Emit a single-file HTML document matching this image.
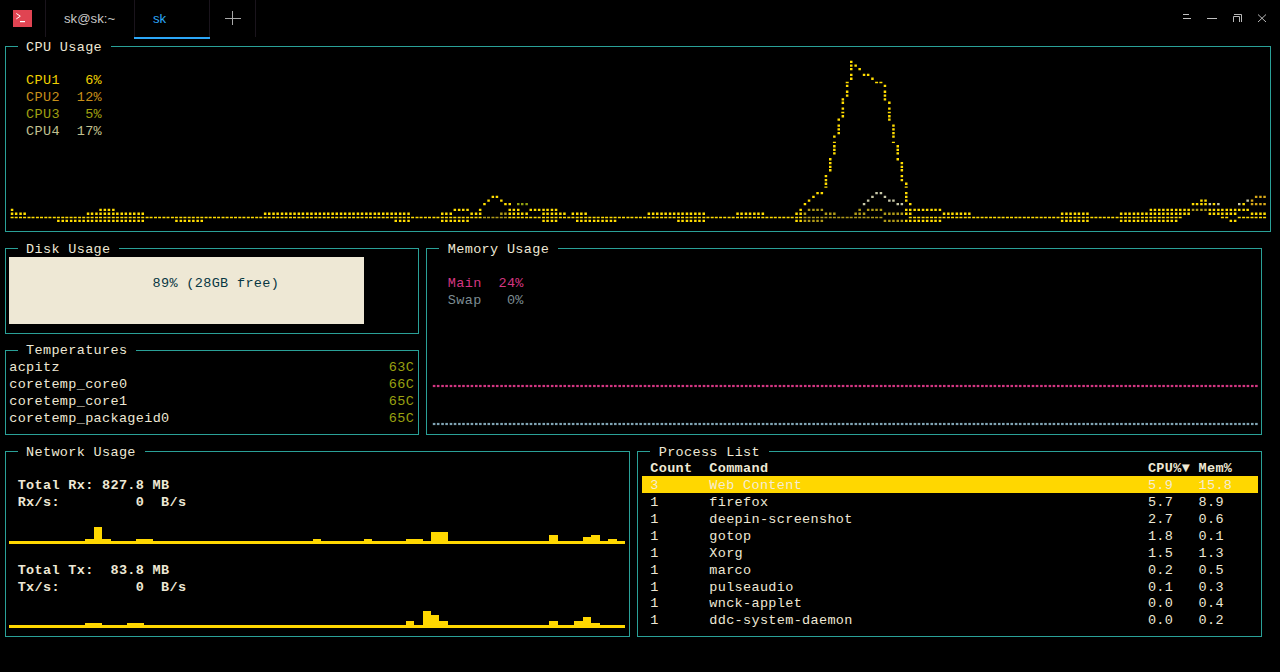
<!DOCTYPE html><html><head><meta charset="utf-8"><style>
html,body{margin:0;padding:0;background:#000;width:1280px;height:672px;overflow:hidden;position:relative}
.bx{position:absolute;box-sizing:border-box;border:1px solid #2aa198}
.gap{position:absolute;height:3px;background:#000}
.t{position:absolute;font-family:"Liberation Mono",monospace;font-size:13.5px;line-height:17px;white-space:pre;letter-spacing:0.335px}
.s{position:absolute}
</style></head><body>
<div class="s" style="left:13px;top:10px;width:19px;height:17px;background:#e04452"></div>
<svg class="s" style="left:0;top:0" width="1280" height="40"><path d="M16.3 13.5 L20.3 16.2 L16.3 18.9" fill="none" stroke="#fff" stroke-width="1"/><rect x="20" y="21" width="5" height="1.2" fill="#fff"/><rect x="45" y="0" width="1" height="37" fill="#1a141c"/><rect x="134" y="0" width="1" height="37" fill="#1a141c"/><rect x="209" y="0" width="1" height="37" fill="#1a141c"/><rect x="255" y="0" width="1" height="37" fill="#1a141c"/><rect x="134" y="37" width="76" height="2" fill="#2ca7f8"/><rect x="225" y="18" width="16" height="1" fill="#a8a8a8"/><rect x="232" y="11" width="1" height="14" fill="#a8a8a8"/><rect x="1183" y="14" width="6" height="1" fill="#c0c0c0"/><rect x="1183" y="18" width="8" height="1" fill="#c0c0c0"/><rect x="1207" y="18" width="10" height="1" fill="#c0c0c0"/><path d="M1234 14.5 H1241.5 V22 M1233.5 22 V16.5 H1239.5 V22" fill="none" stroke="#b8b8b8" stroke-width="1"/><path d="M1258 14.5 L1266 22 M1266 14.5 L1258 22" fill="none" stroke="#b8b8b8" stroke-width="1"/></svg>
<div class="s" style="left:64px;top:10px;font-family:'Liberation Sans',sans-serif;font-size:13.2px;line-height:18px;color:#c8c8c8">sk@sk:~</div>
<div class="s" style="left:153px;top:10px;font-family:'Liberation Sans',sans-serif;font-size:13.2px;line-height:18px;color:#2ca7f8">sk</div>
<div class="bx" style="left:5px;top:46px;width:1266px;height:186px"></div>
<div class="gap" style="left:18px;top:45px;width:93px"></div>
<div class="t" style="left:26.09px;top:39.00px;color:#eee8d5;">CPU&#160;Usage</div>
<div class="bx" style="left:5px;top:248px;width:414px;height:86px"></div>
<div class="gap" style="left:18px;top:247px;width:101px"></div>
<div class="t" style="left:26.09px;top:241.00px;color:#eee8d5;">Disk&#160;Usage</div>
<div class="bx" style="left:5px;top:350px;width:414px;height:85px"></div>
<div class="gap" style="left:18px;top:349px;width:118px"></div>
<div class="t" style="left:26.09px;top:342.00px;color:#eee8d5;">Temperatures</div>
<div class="bx" style="left:5px;top:451px;width:625px;height:186px"></div>
<div class="gap" style="left:18px;top:450px;width:127px"></div>
<div class="t" style="left:26.09px;top:444.00px;color:#eee8d5;">Network&#160;Usage</div>
<div class="bx" style="left:426px;top:248px;width:836px;height:187px"></div>
<div class="gap" style="left:439px;top:247px;width:119px"></div>
<div class="t" style="left:447.84px;top:241.00px;color:#eee8d5;">Memory&#160;Usage</div>
<div class="bx" style="left:637px;top:451px;width:625px;height:186px"></div>
<div class="gap" style="left:650px;top:450px;width:119px"></div>
<div class="t" style="left:658.71px;top:444.00px;color:#eee8d5;">Process&#160;List</div>
<div class="t" style="left:26.09px;top:72.00px;color:#f0d000;">CPU1&#160;&#160;&#160;6%</div>
<div class="t" style="left:26.09px;top:89.00px;color:#c8901a;">CPU2&#160;&#160;12%</div>
<div class="t" style="left:26.09px;top:106.00px;color:#a0a010;">CPU3&#160;&#160;&#160;5%</div>
<div class="t" style="left:26.09px;top:123.00px;color:#c0c090;">CPU4&#160;&#160;17%</div>
<div class="s" style="left:9px;top:257px;width:355px;height:67px;background:#eee8d5"></div>
<div class="t" style="left:152.61px;top:275.00px;color:#073642;">89%&#160;(28GB&#160;free)</div>
<div class="t" style="left:9.22px;top:359.00px;color:#eee8d5;">acpitz</div>
<div class="t" style="left:388.79px;top:359.00px;color:#9aa010;">63C</div>
<div class="t" style="left:9.22px;top:376.00px;color:#eee8d5;">coretemp_core0</div>
<div class="t" style="left:388.79px;top:376.00px;color:#9aa010;">66C</div>
<div class="t" style="left:9.22px;top:393.00px;color:#eee8d5;">coretemp_core1</div>
<div class="t" style="left:388.79px;top:393.00px;color:#9aa010;">65C</div>
<div class="t" style="left:9.22px;top:410.00px;color:#eee8d5;">coretemp_packageid0</div>
<div class="t" style="left:388.79px;top:410.00px;color:#9aa010;">65C</div>
<div class="t" style="left:447.84px;top:275.00px;color:#d33682;">Main&#160;&#160;24%</div>
<div class="t" style="left:447.84px;top:292.00px;color:#7d8d93;">Swap&#160;&#160;&#160;0%</div>
<div class="t" style="left:17.65px;top:477.00px;color:#eee8d5;font-weight:bold;">Total&#160;Rx:&#160;827.8&#160;MB</div>
<div class="t" style="left:17.65px;top:494.00px;color:#eee8d5;font-weight:bold;">Rx/s:&#160;&#160;&#160;&#160;&#160;&#160;&#160;&#160;&#160;0&#160;&#160;B/s</div>
<div class="t" style="left:17.65px;top:562.00px;color:#eee8d5;font-weight:bold;">Total&#160;Tx:&#160;&#160;83.8&#160;MB</div>
<div class="t" style="left:17.65px;top:579.00px;color:#eee8d5;font-weight:bold;">Tx/s:&#160;&#160;&#160;&#160;&#160;&#160;&#160;&#160;&#160;0&#160;&#160;B/s</div>
<div class="s" style="left:642px;top:476px;width:616px;height:17px;background:#ffd700"></div>
<div class="t" style="left:650.28px;top:460.00px;color:#eee8d5;font-weight:bold;">Count</div>
<div class="t" style="left:709.32px;top:460.00px;color:#eee8d5;font-weight:bold;">Command</div>
<div class="t" style="left:1147.94px;top:460.00px;color:#eee8d5;font-weight:bold;">CPU%▼&#160;Mem%</div>
<div class="t" style="left:650.28px;top:477.00px;color:#f5ecd2;">3</div>
<div class="t" style="left:709.32px;top:477.00px;color:#f5ecd2;">Web&#160;Content</div>
<div class="t" style="left:1147.94px;top:477.00px;color:#f5ecd2;">5.9</div>
<div class="t" style="left:1198.55px;top:477.00px;color:#f5ecd2;">15.8</div>
<div class="t" style="left:650.28px;top:494.00px;color:#eee8d5;">1</div>
<div class="t" style="left:709.32px;top:494.00px;color:#eee8d5;">firefox</div>
<div class="t" style="left:1147.94px;top:494.00px;color:#eee8d5;">5.7</div>
<div class="t" style="left:1198.55px;top:494.00px;color:#eee8d5;">8.9</div>
<div class="t" style="left:650.28px;top:511.00px;color:#eee8d5;">1</div>
<div class="t" style="left:709.32px;top:511.00px;color:#eee8d5;">deepin-screenshot</div>
<div class="t" style="left:1147.94px;top:511.00px;color:#eee8d5;">2.7</div>
<div class="t" style="left:1198.55px;top:511.00px;color:#eee8d5;">0.6</div>
<div class="t" style="left:650.28px;top:528.00px;color:#eee8d5;">1</div>
<div class="t" style="left:709.32px;top:528.00px;color:#eee8d5;">gotop</div>
<div class="t" style="left:1147.94px;top:528.00px;color:#eee8d5;">1.8</div>
<div class="t" style="left:1198.55px;top:528.00px;color:#eee8d5;">0.1</div>
<div class="t" style="left:650.28px;top:545.00px;color:#eee8d5;">1</div>
<div class="t" style="left:709.32px;top:545.00px;color:#eee8d5;">Xorg</div>
<div class="t" style="left:1147.94px;top:545.00px;color:#eee8d5;">1.5</div>
<div class="t" style="left:1198.55px;top:545.00px;color:#eee8d5;">1.3</div>
<div class="t" style="left:650.28px;top:562.00px;color:#eee8d5;">1</div>
<div class="t" style="left:709.32px;top:562.00px;color:#eee8d5;">marco</div>
<div class="t" style="left:1147.94px;top:562.00px;color:#eee8d5;">0.2</div>
<div class="t" style="left:1198.55px;top:562.00px;color:#eee8d5;">0.5</div>
<div class="t" style="left:650.28px;top:579.00px;color:#eee8d5;">1</div>
<div class="t" style="left:709.32px;top:579.00px;color:#eee8d5;">pulseaudio</div>
<div class="t" style="left:1147.94px;top:579.00px;color:#eee8d5;">0.1</div>
<div class="t" style="left:1198.55px;top:579.00px;color:#eee8d5;">0.3</div>
<div class="t" style="left:650.28px;top:595.00px;color:#eee8d5;">1</div>
<div class="t" style="left:709.32px;top:595.00px;color:#eee8d5;">wnck-applet</div>
<div class="t" style="left:1147.94px;top:595.00px;color:#eee8d5;">0.0</div>
<div class="t" style="left:1198.55px;top:595.00px;color:#eee8d5;">0.4</div>
<div class="t" style="left:650.28px;top:612.00px;color:#eee8d5;">1</div>
<div class="t" style="left:709.32px;top:612.00px;color:#eee8d5;">ddc-system-daemon</div>
<div class="t" style="left:1147.94px;top:612.00px;color:#eee8d5;">0.0</div>
<div class="t" style="left:1198.55px;top:612.00px;color:#eee8d5;">0.2</div>
<svg class="s" style="left:0;top:0" width="640" height="672"><rect x="9" y="541" width="616" height="3" fill="#ffd700"/><rect x="85" y="539" width="26" height="2" fill="#ffd700"/><rect x="94" y="527" width="8" height="14" fill="#ffd700"/><rect x="136" y="539" width="17" height="2" fill="#ffd700"/><rect x="313" y="539" width="8" height="2" fill="#ffd700"/><rect x="364" y="539" width="8" height="2" fill="#ffd700"/><rect x="406" y="539" width="17" height="2" fill="#ffd700"/><rect x="431" y="532" width="17" height="9" fill="#ffd700"/><rect x="549" y="535" width="9" height="6" fill="#ffd700"/><rect x="583" y="537" width="8" height="4" fill="#ffd700"/><rect x="591" y="535" width="9" height="6" fill="#ffd700"/><rect x="608" y="539" width="9" height="2" fill="#ffd700"/></svg>
<svg class="s" style="left:0;top:0" width="640" height="672"><rect x="9" y="625" width="616" height="3" fill="#ffd700"/><rect x="85" y="623" width="17" height="2" fill="#ffd700"/><rect x="127" y="623" width="17" height="2" fill="#ffd700"/><rect x="406" y="621" width="8" height="4" fill="#ffd700"/><rect x="423" y="611" width="8" height="14" fill="#ffd700"/><rect x="431" y="615" width="8" height="10" fill="#ffd700"/><rect x="439" y="621" width="9" height="4" fill="#ffd700"/><rect x="549" y="621" width="9" height="4" fill="#ffd700"/><rect x="574" y="621" width="9" height="4" fill="#ffd700"/><rect x="583" y="617" width="8" height="8" fill="#ffd700"/><rect x="591" y="623" width="9" height="2" fill="#ffd700"/></svg>
<svg class="s" style="left:0;top:0" width="1280" height="672"><rect x="432.80" y="384.9" width="2.6" height="2.2" fill="#d33682"/><rect x="436.88" y="384.9" width="2.6" height="2.2" fill="#d33682"/><rect x="441.24" y="384.9" width="2.6" height="2.2" fill="#d33682"/><rect x="445.31" y="384.9" width="2.6" height="2.2" fill="#d33682"/><rect x="449.67" y="384.9" width="2.6" height="2.2" fill="#d33682"/><rect x="453.75" y="384.9" width="2.6" height="2.2" fill="#d33682"/><rect x="458.11" y="384.9" width="2.6" height="2.2" fill="#d33682"/><rect x="462.19" y="384.9" width="2.6" height="2.2" fill="#d33682"/><rect x="466.54" y="384.9" width="2.6" height="2.2" fill="#d33682"/><rect x="470.62" y="384.9" width="2.6" height="2.2" fill="#d33682"/><rect x="474.98" y="384.9" width="2.6" height="2.2" fill="#d33682"/><rect x="479.06" y="384.9" width="2.6" height="2.2" fill="#d33682"/><rect x="483.41" y="384.9" width="2.6" height="2.2" fill="#d33682"/><rect x="487.49" y="384.9" width="2.6" height="2.2" fill="#d33682"/><rect x="491.85" y="384.9" width="2.6" height="2.2" fill="#d33682"/><rect x="495.93" y="384.9" width="2.6" height="2.2" fill="#d33682"/><rect x="500.28" y="384.9" width="2.6" height="2.2" fill="#d33682"/><rect x="504.36" y="384.9" width="2.6" height="2.2" fill="#d33682"/><rect x="508.72" y="384.9" width="2.6" height="2.2" fill="#d33682"/><rect x="512.80" y="384.9" width="2.6" height="2.2" fill="#d33682"/><rect x="517.15" y="384.9" width="2.6" height="2.2" fill="#d33682"/><rect x="521.23" y="384.9" width="2.6" height="2.2" fill="#d33682"/><rect x="525.59" y="384.9" width="2.6" height="2.2" fill="#d33682"/><rect x="529.67" y="384.9" width="2.6" height="2.2" fill="#d33682"/><rect x="534.02" y="384.9" width="2.6" height="2.2" fill="#d33682"/><rect x="538.10" y="384.9" width="2.6" height="2.2" fill="#d33682"/><rect x="542.46" y="384.9" width="2.6" height="2.2" fill="#d33682"/><rect x="546.54" y="384.9" width="2.6" height="2.2" fill="#d33682"/><rect x="550.89" y="384.9" width="2.6" height="2.2" fill="#d33682"/><rect x="554.97" y="384.9" width="2.6" height="2.2" fill="#d33682"/><rect x="559.33" y="384.9" width="2.6" height="2.2" fill="#d33682"/><rect x="563.41" y="384.9" width="2.6" height="2.2" fill="#d33682"/><rect x="567.76" y="384.9" width="2.6" height="2.2" fill="#d33682"/><rect x="571.84" y="384.9" width="2.6" height="2.2" fill="#d33682"/><rect x="576.20" y="384.9" width="2.6" height="2.2" fill="#d33682"/><rect x="580.28" y="384.9" width="2.6" height="2.2" fill="#d33682"/><rect x="584.63" y="384.9" width="2.6" height="2.2" fill="#d33682"/><rect x="588.71" y="384.9" width="2.6" height="2.2" fill="#d33682"/><rect x="593.07" y="384.9" width="2.6" height="2.2" fill="#d33682"/><rect x="597.15" y="384.9" width="2.6" height="2.2" fill="#d33682"/><rect x="601.50" y="384.9" width="2.6" height="2.2" fill="#d33682"/><rect x="605.58" y="384.9" width="2.6" height="2.2" fill="#d33682"/><rect x="609.94" y="384.9" width="2.6" height="2.2" fill="#d33682"/><rect x="614.02" y="384.9" width="2.6" height="2.2" fill="#d33682"/><rect x="618.37" y="384.9" width="2.6" height="2.2" fill="#d33682"/><rect x="622.45" y="384.9" width="2.6" height="2.2" fill="#d33682"/><rect x="626.81" y="384.9" width="2.6" height="2.2" fill="#d33682"/><rect x="630.89" y="384.9" width="2.6" height="2.2" fill="#d33682"/><rect x="635.24" y="384.9" width="2.6" height="2.2" fill="#d33682"/><rect x="639.32" y="384.9" width="2.6" height="2.2" fill="#d33682"/><rect x="643.68" y="384.9" width="2.6" height="2.2" fill="#d33682"/><rect x="647.76" y="384.9" width="2.6" height="2.2" fill="#d33682"/><rect x="652.11" y="384.9" width="2.6" height="2.2" fill="#d33682"/><rect x="656.19" y="384.9" width="2.6" height="2.2" fill="#d33682"/><rect x="660.55" y="384.9" width="2.6" height="2.2" fill="#d33682"/><rect x="664.63" y="384.9" width="2.6" height="2.2" fill="#d33682"/><rect x="668.98" y="384.9" width="2.6" height="2.2" fill="#d33682"/><rect x="673.06" y="384.9" width="2.6" height="2.2" fill="#d33682"/><rect x="677.42" y="384.9" width="2.6" height="2.2" fill="#d33682"/><rect x="681.50" y="384.9" width="2.6" height="2.2" fill="#d33682"/><rect x="685.85" y="384.9" width="2.6" height="2.2" fill="#d33682"/><rect x="689.93" y="384.9" width="2.6" height="2.2" fill="#d33682"/><rect x="694.29" y="384.9" width="2.6" height="2.2" fill="#d33682"/><rect x="698.37" y="384.9" width="2.6" height="2.2" fill="#d33682"/><rect x="702.72" y="384.9" width="2.6" height="2.2" fill="#d33682"/><rect x="706.80" y="384.9" width="2.6" height="2.2" fill="#d33682"/><rect x="711.16" y="384.9" width="2.6" height="2.2" fill="#d33682"/><rect x="715.24" y="384.9" width="2.6" height="2.2" fill="#d33682"/><rect x="719.59" y="384.9" width="2.6" height="2.2" fill="#d33682"/><rect x="723.67" y="384.9" width="2.6" height="2.2" fill="#d33682"/><rect x="728.03" y="384.9" width="2.6" height="2.2" fill="#d33682"/><rect x="732.11" y="384.9" width="2.6" height="2.2" fill="#d33682"/><rect x="736.46" y="384.9" width="2.6" height="2.2" fill="#d33682"/><rect x="740.54" y="384.9" width="2.6" height="2.2" fill="#d33682"/><rect x="744.90" y="384.9" width="2.6" height="2.2" fill="#d33682"/><rect x="748.98" y="384.9" width="2.6" height="2.2" fill="#d33682"/><rect x="753.33" y="384.9" width="2.6" height="2.2" fill="#d33682"/><rect x="757.41" y="384.9" width="2.6" height="2.2" fill="#d33682"/><rect x="761.77" y="384.9" width="2.6" height="2.2" fill="#d33682"/><rect x="765.85" y="384.9" width="2.6" height="2.2" fill="#d33682"/><rect x="770.20" y="384.9" width="2.6" height="2.2" fill="#d33682"/><rect x="774.28" y="384.9" width="2.6" height="2.2" fill="#d33682"/><rect x="778.64" y="384.9" width="2.6" height="2.2" fill="#d33682"/><rect x="782.72" y="384.9" width="2.6" height="2.2" fill="#d33682"/><rect x="787.07" y="384.9" width="2.6" height="2.2" fill="#d33682"/><rect x="791.15" y="384.9" width="2.6" height="2.2" fill="#d33682"/><rect x="795.51" y="384.9" width="2.6" height="2.2" fill="#d33682"/><rect x="799.59" y="384.9" width="2.6" height="2.2" fill="#d33682"/><rect x="803.94" y="384.9" width="2.6" height="2.2" fill="#d33682"/><rect x="808.02" y="384.9" width="2.6" height="2.2" fill="#d33682"/><rect x="812.38" y="384.9" width="2.6" height="2.2" fill="#d33682"/><rect x="816.46" y="384.9" width="2.6" height="2.2" fill="#d33682"/><rect x="820.81" y="384.9" width="2.6" height="2.2" fill="#d33682"/><rect x="824.89" y="384.9" width="2.6" height="2.2" fill="#d33682"/><rect x="829.25" y="384.9" width="2.6" height="2.2" fill="#d33682"/><rect x="833.33" y="384.9" width="2.6" height="2.2" fill="#d33682"/><rect x="837.68" y="384.9" width="2.6" height="2.2" fill="#d33682"/><rect x="841.76" y="384.9" width="2.6" height="2.2" fill="#d33682"/><rect x="846.12" y="384.9" width="2.6" height="2.2" fill="#d33682"/><rect x="850.20" y="384.9" width="2.6" height="2.2" fill="#d33682"/><rect x="854.55" y="384.9" width="2.6" height="2.2" fill="#d33682"/><rect x="858.63" y="384.9" width="2.6" height="2.2" fill="#d33682"/><rect x="862.99" y="384.9" width="2.6" height="2.2" fill="#d33682"/><rect x="867.07" y="384.9" width="2.6" height="2.2" fill="#d33682"/><rect x="871.42" y="384.9" width="2.6" height="2.2" fill="#d33682"/><rect x="875.50" y="384.9" width="2.6" height="2.2" fill="#d33682"/><rect x="879.86" y="384.9" width="2.6" height="2.2" fill="#d33682"/><rect x="883.94" y="384.9" width="2.6" height="2.2" fill="#d33682"/><rect x="888.29" y="384.9" width="2.6" height="2.2" fill="#d33682"/><rect x="892.37" y="384.9" width="2.6" height="2.2" fill="#d33682"/><rect x="896.73" y="384.9" width="2.6" height="2.2" fill="#d33682"/><rect x="900.81" y="384.9" width="2.6" height="2.2" fill="#d33682"/><rect x="905.16" y="384.9" width="2.6" height="2.2" fill="#d33682"/><rect x="909.24" y="384.9" width="2.6" height="2.2" fill="#d33682"/><rect x="913.60" y="384.9" width="2.6" height="2.2" fill="#d33682"/><rect x="917.68" y="384.9" width="2.6" height="2.2" fill="#d33682"/><rect x="922.03" y="384.9" width="2.6" height="2.2" fill="#d33682"/><rect x="926.11" y="384.9" width="2.6" height="2.2" fill="#d33682"/><rect x="930.47" y="384.9" width="2.6" height="2.2" fill="#d33682"/><rect x="934.55" y="384.9" width="2.6" height="2.2" fill="#d33682"/><rect x="938.90" y="384.9" width="2.6" height="2.2" fill="#d33682"/><rect x="942.98" y="384.9" width="2.6" height="2.2" fill="#d33682"/><rect x="947.34" y="384.9" width="2.6" height="2.2" fill="#d33682"/><rect x="951.42" y="384.9" width="2.6" height="2.2" fill="#d33682"/><rect x="955.77" y="384.9" width="2.6" height="2.2" fill="#d33682"/><rect x="959.85" y="384.9" width="2.6" height="2.2" fill="#d33682"/><rect x="964.21" y="384.9" width="2.6" height="2.2" fill="#d33682"/><rect x="968.29" y="384.9" width="2.6" height="2.2" fill="#d33682"/><rect x="972.64" y="384.9" width="2.6" height="2.2" fill="#d33682"/><rect x="976.72" y="384.9" width="2.6" height="2.2" fill="#d33682"/><rect x="981.08" y="384.9" width="2.6" height="2.2" fill="#d33682"/><rect x="985.16" y="384.9" width="2.6" height="2.2" fill="#d33682"/><rect x="989.51" y="384.9" width="2.6" height="2.2" fill="#d33682"/><rect x="993.59" y="384.9" width="2.6" height="2.2" fill="#d33682"/><rect x="997.95" y="384.9" width="2.6" height="2.2" fill="#d33682"/><rect x="1002.03" y="384.9" width="2.6" height="2.2" fill="#d33682"/><rect x="1006.38" y="384.9" width="2.6" height="2.2" fill="#d33682"/><rect x="1010.46" y="384.9" width="2.6" height="2.2" fill="#d33682"/><rect x="1014.82" y="384.9" width="2.6" height="2.2" fill="#d33682"/><rect x="1018.90" y="384.9" width="2.6" height="2.2" fill="#d33682"/><rect x="1023.25" y="384.9" width="2.6" height="2.2" fill="#d33682"/><rect x="1027.33" y="384.9" width="2.6" height="2.2" fill="#d33682"/><rect x="1031.69" y="384.9" width="2.6" height="2.2" fill="#d33682"/><rect x="1035.77" y="384.9" width="2.6" height="2.2" fill="#d33682"/><rect x="1040.12" y="384.9" width="2.6" height="2.2" fill="#d33682"/><rect x="1044.20" y="384.9" width="2.6" height="2.2" fill="#d33682"/><rect x="1048.56" y="384.9" width="2.6" height="2.2" fill="#d33682"/><rect x="1052.63" y="384.9" width="2.6" height="2.2" fill="#d33682"/><rect x="1056.99" y="384.9" width="2.6" height="2.2" fill="#d33682"/><rect x="1061.07" y="384.9" width="2.6" height="2.2" fill="#d33682"/><rect x="1065.42" y="384.9" width="2.6" height="2.2" fill="#d33682"/><rect x="1069.50" y="384.9" width="2.6" height="2.2" fill="#d33682"/><rect x="1073.86" y="384.9" width="2.6" height="2.2" fill="#d33682"/><rect x="1077.94" y="384.9" width="2.6" height="2.2" fill="#d33682"/><rect x="1082.30" y="384.9" width="2.6" height="2.2" fill="#d33682"/><rect x="1086.38" y="384.9" width="2.6" height="2.2" fill="#d33682"/><rect x="1090.73" y="384.9" width="2.6" height="2.2" fill="#d33682"/><rect x="1094.81" y="384.9" width="2.6" height="2.2" fill="#d33682"/><rect x="1099.17" y="384.9" width="2.6" height="2.2" fill="#d33682"/><rect x="1103.25" y="384.9" width="2.6" height="2.2" fill="#d33682"/><rect x="1107.60" y="384.9" width="2.6" height="2.2" fill="#d33682"/><rect x="1111.68" y="384.9" width="2.6" height="2.2" fill="#d33682"/><rect x="1116.04" y="384.9" width="2.6" height="2.2" fill="#d33682"/><rect x="1120.12" y="384.9" width="2.6" height="2.2" fill="#d33682"/><rect x="1124.47" y="384.9" width="2.6" height="2.2" fill="#d33682"/><rect x="1128.55" y="384.9" width="2.6" height="2.2" fill="#d33682"/><rect x="1132.90" y="384.9" width="2.6" height="2.2" fill="#d33682"/><rect x="1136.98" y="384.9" width="2.6" height="2.2" fill="#d33682"/><rect x="1141.34" y="384.9" width="2.6" height="2.2" fill="#d33682"/><rect x="1145.42" y="384.9" width="2.6" height="2.2" fill="#d33682"/><rect x="1149.78" y="384.9" width="2.6" height="2.2" fill="#d33682"/><rect x="1153.86" y="384.9" width="2.6" height="2.2" fill="#d33682"/><rect x="1158.21" y="384.9" width="2.6" height="2.2" fill="#d33682"/><rect x="1162.29" y="384.9" width="2.6" height="2.2" fill="#d33682"/><rect x="1166.65" y="384.9" width="2.6" height="2.2" fill="#d33682"/><rect x="1170.73" y="384.9" width="2.6" height="2.2" fill="#d33682"/><rect x="1175.08" y="384.9" width="2.6" height="2.2" fill="#d33682"/><rect x="1179.16" y="384.9" width="2.6" height="2.2" fill="#d33682"/><rect x="1183.52" y="384.9" width="2.6" height="2.2" fill="#d33682"/><rect x="1187.60" y="384.9" width="2.6" height="2.2" fill="#d33682"/><rect x="1191.95" y="384.9" width="2.6" height="2.2" fill="#d33682"/><rect x="1196.03" y="384.9" width="2.6" height="2.2" fill="#d33682"/><rect x="1200.38" y="384.9" width="2.6" height="2.2" fill="#d33682"/><rect x="1204.46" y="384.9" width="2.6" height="2.2" fill="#d33682"/><rect x="1208.82" y="384.9" width="2.6" height="2.2" fill="#d33682"/><rect x="1212.90" y="384.9" width="2.6" height="2.2" fill="#d33682"/><rect x="1217.26" y="384.9" width="2.6" height="2.2" fill="#d33682"/><rect x="1221.34" y="384.9" width="2.6" height="2.2" fill="#d33682"/><rect x="1225.69" y="384.9" width="2.6" height="2.2" fill="#d33682"/><rect x="1229.77" y="384.9" width="2.6" height="2.2" fill="#d33682"/><rect x="1234.13" y="384.9" width="2.6" height="2.2" fill="#d33682"/><rect x="1238.21" y="384.9" width="2.6" height="2.2" fill="#d33682"/><rect x="1242.56" y="384.9" width="2.6" height="2.2" fill="#d33682"/><rect x="1246.64" y="384.9" width="2.6" height="2.2" fill="#d33682"/><rect x="1251.00" y="384.9" width="2.6" height="2.2" fill="#d33682"/><rect x="1255.08" y="384.9" width="2.6" height="2.2" fill="#d33682"/></svg>
<svg class="s" style="left:0;top:0" width="1280" height="672"><rect x="432.80" y="422.9" width="2.6" height="2.2" fill="#80a4b4"/><rect x="436.88" y="422.9" width="2.6" height="2.2" fill="#80a4b4"/><rect x="441.24" y="422.9" width="2.6" height="2.2" fill="#80a4b4"/><rect x="445.31" y="422.9" width="2.6" height="2.2" fill="#80a4b4"/><rect x="449.67" y="422.9" width="2.6" height="2.2" fill="#80a4b4"/><rect x="453.75" y="422.9" width="2.6" height="2.2" fill="#80a4b4"/><rect x="458.11" y="422.9" width="2.6" height="2.2" fill="#80a4b4"/><rect x="462.19" y="422.9" width="2.6" height="2.2" fill="#80a4b4"/><rect x="466.54" y="422.9" width="2.6" height="2.2" fill="#80a4b4"/><rect x="470.62" y="422.9" width="2.6" height="2.2" fill="#80a4b4"/><rect x="474.98" y="422.9" width="2.6" height="2.2" fill="#80a4b4"/><rect x="479.06" y="422.9" width="2.6" height="2.2" fill="#80a4b4"/><rect x="483.41" y="422.9" width="2.6" height="2.2" fill="#80a4b4"/><rect x="487.49" y="422.9" width="2.6" height="2.2" fill="#80a4b4"/><rect x="491.85" y="422.9" width="2.6" height="2.2" fill="#80a4b4"/><rect x="495.93" y="422.9" width="2.6" height="2.2" fill="#80a4b4"/><rect x="500.28" y="422.9" width="2.6" height="2.2" fill="#80a4b4"/><rect x="504.36" y="422.9" width="2.6" height="2.2" fill="#80a4b4"/><rect x="508.72" y="422.9" width="2.6" height="2.2" fill="#80a4b4"/><rect x="512.80" y="422.9" width="2.6" height="2.2" fill="#80a4b4"/><rect x="517.15" y="422.9" width="2.6" height="2.2" fill="#80a4b4"/><rect x="521.23" y="422.9" width="2.6" height="2.2" fill="#80a4b4"/><rect x="525.59" y="422.9" width="2.6" height="2.2" fill="#80a4b4"/><rect x="529.67" y="422.9" width="2.6" height="2.2" fill="#80a4b4"/><rect x="534.02" y="422.9" width="2.6" height="2.2" fill="#80a4b4"/><rect x="538.10" y="422.9" width="2.6" height="2.2" fill="#80a4b4"/><rect x="542.46" y="422.9" width="2.6" height="2.2" fill="#80a4b4"/><rect x="546.54" y="422.9" width="2.6" height="2.2" fill="#80a4b4"/><rect x="550.89" y="422.9" width="2.6" height="2.2" fill="#80a4b4"/><rect x="554.97" y="422.9" width="2.6" height="2.2" fill="#80a4b4"/><rect x="559.33" y="422.9" width="2.6" height="2.2" fill="#80a4b4"/><rect x="563.41" y="422.9" width="2.6" height="2.2" fill="#80a4b4"/><rect x="567.76" y="422.9" width="2.6" height="2.2" fill="#80a4b4"/><rect x="571.84" y="422.9" width="2.6" height="2.2" fill="#80a4b4"/><rect x="576.20" y="422.9" width="2.6" height="2.2" fill="#80a4b4"/><rect x="580.28" y="422.9" width="2.6" height="2.2" fill="#80a4b4"/><rect x="584.63" y="422.9" width="2.6" height="2.2" fill="#80a4b4"/><rect x="588.71" y="422.9" width="2.6" height="2.2" fill="#80a4b4"/><rect x="593.07" y="422.9" width="2.6" height="2.2" fill="#80a4b4"/><rect x="597.15" y="422.9" width="2.6" height="2.2" fill="#80a4b4"/><rect x="601.50" y="422.9" width="2.6" height="2.2" fill="#80a4b4"/><rect x="605.58" y="422.9" width="2.6" height="2.2" fill="#80a4b4"/><rect x="609.94" y="422.9" width="2.6" height="2.2" fill="#80a4b4"/><rect x="614.02" y="422.9" width="2.6" height="2.2" fill="#80a4b4"/><rect x="618.37" y="422.9" width="2.6" height="2.2" fill="#80a4b4"/><rect x="622.45" y="422.9" width="2.6" height="2.2" fill="#80a4b4"/><rect x="626.81" y="422.9" width="2.6" height="2.2" fill="#80a4b4"/><rect x="630.89" y="422.9" width="2.6" height="2.2" fill="#80a4b4"/><rect x="635.24" y="422.9" width="2.6" height="2.2" fill="#80a4b4"/><rect x="639.32" y="422.9" width="2.6" height="2.2" fill="#80a4b4"/><rect x="643.68" y="422.9" width="2.6" height="2.2" fill="#80a4b4"/><rect x="647.76" y="422.9" width="2.6" height="2.2" fill="#80a4b4"/><rect x="652.11" y="422.9" width="2.6" height="2.2" fill="#80a4b4"/><rect x="656.19" y="422.9" width="2.6" height="2.2" fill="#80a4b4"/><rect x="660.55" y="422.9" width="2.6" height="2.2" fill="#80a4b4"/><rect x="664.63" y="422.9" width="2.6" height="2.2" fill="#80a4b4"/><rect x="668.98" y="422.9" width="2.6" height="2.2" fill="#80a4b4"/><rect x="673.06" y="422.9" width="2.6" height="2.2" fill="#80a4b4"/><rect x="677.42" y="422.9" width="2.6" height="2.2" fill="#80a4b4"/><rect x="681.50" y="422.9" width="2.6" height="2.2" fill="#80a4b4"/><rect x="685.85" y="422.9" width="2.6" height="2.2" fill="#80a4b4"/><rect x="689.93" y="422.9" width="2.6" height="2.2" fill="#80a4b4"/><rect x="694.29" y="422.9" width="2.6" height="2.2" fill="#80a4b4"/><rect x="698.37" y="422.9" width="2.6" height="2.2" fill="#80a4b4"/><rect x="702.72" y="422.9" width="2.6" height="2.2" fill="#80a4b4"/><rect x="706.80" y="422.9" width="2.6" height="2.2" fill="#80a4b4"/><rect x="711.16" y="422.9" width="2.6" height="2.2" fill="#80a4b4"/><rect x="715.24" y="422.9" width="2.6" height="2.2" fill="#80a4b4"/><rect x="719.59" y="422.9" width="2.6" height="2.2" fill="#80a4b4"/><rect x="723.67" y="422.9" width="2.6" height="2.2" fill="#80a4b4"/><rect x="728.03" y="422.9" width="2.6" height="2.2" fill="#80a4b4"/><rect x="732.11" y="422.9" width="2.6" height="2.2" fill="#80a4b4"/><rect x="736.46" y="422.9" width="2.6" height="2.2" fill="#80a4b4"/><rect x="740.54" y="422.9" width="2.6" height="2.2" fill="#80a4b4"/><rect x="744.90" y="422.9" width="2.6" height="2.2" fill="#80a4b4"/><rect x="748.98" y="422.9" width="2.6" height="2.2" fill="#80a4b4"/><rect x="753.33" y="422.9" width="2.6" height="2.2" fill="#80a4b4"/><rect x="757.41" y="422.9" width="2.6" height="2.2" fill="#80a4b4"/><rect x="761.77" y="422.9" width="2.6" height="2.2" fill="#80a4b4"/><rect x="765.85" y="422.9" width="2.6" height="2.2" fill="#80a4b4"/><rect x="770.20" y="422.9" width="2.6" height="2.2" fill="#80a4b4"/><rect x="774.28" y="422.9" width="2.6" height="2.2" fill="#80a4b4"/><rect x="778.64" y="422.9" width="2.6" height="2.2" fill="#80a4b4"/><rect x="782.72" y="422.9" width="2.6" height="2.2" fill="#80a4b4"/><rect x="787.07" y="422.9" width="2.6" height="2.2" fill="#80a4b4"/><rect x="791.15" y="422.9" width="2.6" height="2.2" fill="#80a4b4"/><rect x="795.51" y="422.9" width="2.6" height="2.2" fill="#80a4b4"/><rect x="799.59" y="422.9" width="2.6" height="2.2" fill="#80a4b4"/><rect x="803.94" y="422.9" width="2.6" height="2.2" fill="#80a4b4"/><rect x="808.02" y="422.9" width="2.6" height="2.2" fill="#80a4b4"/><rect x="812.38" y="422.9" width="2.6" height="2.2" fill="#80a4b4"/><rect x="816.46" y="422.9" width="2.6" height="2.2" fill="#80a4b4"/><rect x="820.81" y="422.9" width="2.6" height="2.2" fill="#80a4b4"/><rect x="824.89" y="422.9" width="2.6" height="2.2" fill="#80a4b4"/><rect x="829.25" y="422.9" width="2.6" height="2.2" fill="#80a4b4"/><rect x="833.33" y="422.9" width="2.6" height="2.2" fill="#80a4b4"/><rect x="837.68" y="422.9" width="2.6" height="2.2" fill="#80a4b4"/><rect x="841.76" y="422.9" width="2.6" height="2.2" fill="#80a4b4"/><rect x="846.12" y="422.9" width="2.6" height="2.2" fill="#80a4b4"/><rect x="850.20" y="422.9" width="2.6" height="2.2" fill="#80a4b4"/><rect x="854.55" y="422.9" width="2.6" height="2.2" fill="#80a4b4"/><rect x="858.63" y="422.9" width="2.6" height="2.2" fill="#80a4b4"/><rect x="862.99" y="422.9" width="2.6" height="2.2" fill="#80a4b4"/><rect x="867.07" y="422.9" width="2.6" height="2.2" fill="#80a4b4"/><rect x="871.42" y="422.9" width="2.6" height="2.2" fill="#80a4b4"/><rect x="875.50" y="422.9" width="2.6" height="2.2" fill="#80a4b4"/><rect x="879.86" y="422.9" width="2.6" height="2.2" fill="#80a4b4"/><rect x="883.94" y="422.9" width="2.6" height="2.2" fill="#80a4b4"/><rect x="888.29" y="422.9" width="2.6" height="2.2" fill="#80a4b4"/><rect x="892.37" y="422.9" width="2.6" height="2.2" fill="#80a4b4"/><rect x="896.73" y="422.9" width="2.6" height="2.2" fill="#80a4b4"/><rect x="900.81" y="422.9" width="2.6" height="2.2" fill="#80a4b4"/><rect x="905.16" y="422.9" width="2.6" height="2.2" fill="#80a4b4"/><rect x="909.24" y="422.9" width="2.6" height="2.2" fill="#80a4b4"/><rect x="913.60" y="422.9" width="2.6" height="2.2" fill="#80a4b4"/><rect x="917.68" y="422.9" width="2.6" height="2.2" fill="#80a4b4"/><rect x="922.03" y="422.9" width="2.6" height="2.2" fill="#80a4b4"/><rect x="926.11" y="422.9" width="2.6" height="2.2" fill="#80a4b4"/><rect x="930.47" y="422.9" width="2.6" height="2.2" fill="#80a4b4"/><rect x="934.55" y="422.9" width="2.6" height="2.2" fill="#80a4b4"/><rect x="938.90" y="422.9" width="2.6" height="2.2" fill="#80a4b4"/><rect x="942.98" y="422.9" width="2.6" height="2.2" fill="#80a4b4"/><rect x="947.34" y="422.9" width="2.6" height="2.2" fill="#80a4b4"/><rect x="951.42" y="422.9" width="2.6" height="2.2" fill="#80a4b4"/><rect x="955.77" y="422.9" width="2.6" height="2.2" fill="#80a4b4"/><rect x="959.85" y="422.9" width="2.6" height="2.2" fill="#80a4b4"/><rect x="964.21" y="422.9" width="2.6" height="2.2" fill="#80a4b4"/><rect x="968.29" y="422.9" width="2.6" height="2.2" fill="#80a4b4"/><rect x="972.64" y="422.9" width="2.6" height="2.2" fill="#80a4b4"/><rect x="976.72" y="422.9" width="2.6" height="2.2" fill="#80a4b4"/><rect x="981.08" y="422.9" width="2.6" height="2.2" fill="#80a4b4"/><rect x="985.16" y="422.9" width="2.6" height="2.2" fill="#80a4b4"/><rect x="989.51" y="422.9" width="2.6" height="2.2" fill="#80a4b4"/><rect x="993.59" y="422.9" width="2.6" height="2.2" fill="#80a4b4"/><rect x="997.95" y="422.9" width="2.6" height="2.2" fill="#80a4b4"/><rect x="1002.03" y="422.9" width="2.6" height="2.2" fill="#80a4b4"/><rect x="1006.38" y="422.9" width="2.6" height="2.2" fill="#80a4b4"/><rect x="1010.46" y="422.9" width="2.6" height="2.2" fill="#80a4b4"/><rect x="1014.82" y="422.9" width="2.6" height="2.2" fill="#80a4b4"/><rect x="1018.90" y="422.9" width="2.6" height="2.2" fill="#80a4b4"/><rect x="1023.25" y="422.9" width="2.6" height="2.2" fill="#80a4b4"/><rect x="1027.33" y="422.9" width="2.6" height="2.2" fill="#80a4b4"/><rect x="1031.69" y="422.9" width="2.6" height="2.2" fill="#80a4b4"/><rect x="1035.77" y="422.9" width="2.6" height="2.2" fill="#80a4b4"/><rect x="1040.12" y="422.9" width="2.6" height="2.2" fill="#80a4b4"/><rect x="1044.20" y="422.9" width="2.6" height="2.2" fill="#80a4b4"/><rect x="1048.56" y="422.9" width="2.6" height="2.2" fill="#80a4b4"/><rect x="1052.63" y="422.9" width="2.6" height="2.2" fill="#80a4b4"/><rect x="1056.99" y="422.9" width="2.6" height="2.2" fill="#80a4b4"/><rect x="1061.07" y="422.9" width="2.6" height="2.2" fill="#80a4b4"/><rect x="1065.42" y="422.9" width="2.6" height="2.2" fill="#80a4b4"/><rect x="1069.50" y="422.9" width="2.6" height="2.2" fill="#80a4b4"/><rect x="1073.86" y="422.9" width="2.6" height="2.2" fill="#80a4b4"/><rect x="1077.94" y="422.9" width="2.6" height="2.2" fill="#80a4b4"/><rect x="1082.30" y="422.9" width="2.6" height="2.2" fill="#80a4b4"/><rect x="1086.38" y="422.9" width="2.6" height="2.2" fill="#80a4b4"/><rect x="1090.73" y="422.9" width="2.6" height="2.2" fill="#80a4b4"/><rect x="1094.81" y="422.9" width="2.6" height="2.2" fill="#80a4b4"/><rect x="1099.17" y="422.9" width="2.6" height="2.2" fill="#80a4b4"/><rect x="1103.25" y="422.9" width="2.6" height="2.2" fill="#80a4b4"/><rect x="1107.60" y="422.9" width="2.6" height="2.2" fill="#80a4b4"/><rect x="1111.68" y="422.9" width="2.6" height="2.2" fill="#80a4b4"/><rect x="1116.04" y="422.9" width="2.6" height="2.2" fill="#80a4b4"/><rect x="1120.12" y="422.9" width="2.6" height="2.2" fill="#80a4b4"/><rect x="1124.47" y="422.9" width="2.6" height="2.2" fill="#80a4b4"/><rect x="1128.55" y="422.9" width="2.6" height="2.2" fill="#80a4b4"/><rect x="1132.90" y="422.9" width="2.6" height="2.2" fill="#80a4b4"/><rect x="1136.98" y="422.9" width="2.6" height="2.2" fill="#80a4b4"/><rect x="1141.34" y="422.9" width="2.6" height="2.2" fill="#80a4b4"/><rect x="1145.42" y="422.9" width="2.6" height="2.2" fill="#80a4b4"/><rect x="1149.78" y="422.9" width="2.6" height="2.2" fill="#80a4b4"/><rect x="1153.86" y="422.9" width="2.6" height="2.2" fill="#80a4b4"/><rect x="1158.21" y="422.9" width="2.6" height="2.2" fill="#80a4b4"/><rect x="1162.29" y="422.9" width="2.6" height="2.2" fill="#80a4b4"/><rect x="1166.65" y="422.9" width="2.6" height="2.2" fill="#80a4b4"/><rect x="1170.73" y="422.9" width="2.6" height="2.2" fill="#80a4b4"/><rect x="1175.08" y="422.9" width="2.6" height="2.2" fill="#80a4b4"/><rect x="1179.16" y="422.9" width="2.6" height="2.2" fill="#80a4b4"/><rect x="1183.52" y="422.9" width="2.6" height="2.2" fill="#80a4b4"/><rect x="1187.60" y="422.9" width="2.6" height="2.2" fill="#80a4b4"/><rect x="1191.95" y="422.9" width="2.6" height="2.2" fill="#80a4b4"/><rect x="1196.03" y="422.9" width="2.6" height="2.2" fill="#80a4b4"/><rect x="1200.38" y="422.9" width="2.6" height="2.2" fill="#80a4b4"/><rect x="1204.46" y="422.9" width="2.6" height="2.2" fill="#80a4b4"/><rect x="1208.82" y="422.9" width="2.6" height="2.2" fill="#80a4b4"/><rect x="1212.90" y="422.9" width="2.6" height="2.2" fill="#80a4b4"/><rect x="1217.26" y="422.9" width="2.6" height="2.2" fill="#80a4b4"/><rect x="1221.34" y="422.9" width="2.6" height="2.2" fill="#80a4b4"/><rect x="1225.69" y="422.9" width="2.6" height="2.2" fill="#80a4b4"/><rect x="1229.77" y="422.9" width="2.6" height="2.2" fill="#80a4b4"/><rect x="1234.13" y="422.9" width="2.6" height="2.2" fill="#80a4b4"/><rect x="1238.21" y="422.9" width="2.6" height="2.2" fill="#80a4b4"/><rect x="1242.56" y="422.9" width="2.6" height="2.2" fill="#80a4b4"/><rect x="1246.64" y="422.9" width="2.6" height="2.2" fill="#80a4b4"/><rect x="1251.00" y="422.9" width="2.6" height="2.2" fill="#80a4b4"/><rect x="1255.08" y="422.9" width="2.6" height="2.2" fill="#80a4b4"/></svg>
<svg class="s" style="left:0;top:0" width="1280" height="240"><path fill="#ffdc00" d="M850.0 60.8h2.5v2.3h-2.5zM850.0 64.5h2.5v2.3h-2.5zM854.4 64.5h2.5v2.3h-2.5zM850.0 67.9h2.5v2.3h-2.5zM858.4 67.9h2.5v2.3h-2.5zM850.0 73.7h2.5v2.3h-2.5zM862.8 73.7h2.5v2.3h-2.5zM866.9 73.7h2.5v2.3h-2.5zM850.0 77.6h2.5v2.3h-2.5zM871.2 77.6h2.5v2.3h-2.5zM845.7 81.8h3.0v1.4h-3.0zM875.1 81.8h3.0v1.4h-3.0zM879.4 81.8h3.0v1.4h-3.0zM845.9 84.7h2.5v2.3h-2.5zM883.7 84.7h2.5v2.3h-2.5zM845.9 90.6h2.5v2.3h-2.5zM883.7 90.6h2.5v2.3h-2.5zM845.9 94.5h2.5v2.3h-2.5zM883.7 94.5h2.5v2.3h-2.5zM841.6 98.2h2.5v2.3h-2.5zM883.7 98.2h2.5v2.3h-2.5zM841.6 101.6h2.5v2.3h-2.5zM888.1 101.6h2.5v2.3h-2.5zM841.6 107.5h2.5v2.3h-2.5zM888.1 107.5h2.5v2.3h-2.5zM841.3 111.8h3.0v1.4h-3.0zM887.8 111.8h3.0v1.4h-3.0zM841.6 115.1h2.5v2.3h-2.5zM888.1 115.1h2.5v2.3h-2.5zM837.5 118.5h2.5v2.3h-2.5zM888.1 118.5h2.5v2.3h-2.5zM837.5 124.4h2.5v2.3h-2.5zM892.2 124.4h2.5v2.3h-2.5zM837.5 128.3h2.5v2.3h-2.5zM892.2 128.3h2.5v2.3h-2.5zM837.5 132.0h2.5v2.3h-2.5zM892.2 132.0h2.5v2.3h-2.5zM833.1 135.4h2.5v2.3h-2.5zM892.2 135.4h2.5v2.3h-2.5zM832.9 141.7h3.0v1.4h-3.0zM891.9 141.7h3.0v1.4h-3.0zM833.1 145.1h2.5v2.3h-2.5zM896.5 145.1h2.5v2.3h-2.5zM833.1 148.8h2.5v2.3h-2.5zM896.5 148.8h2.5v2.3h-2.5zM833.1 152.2h2.5v2.3h-2.5zM896.5 152.2h2.5v2.3h-2.5zM829.0 158.1h2.5v2.3h-2.5zM896.5 158.1h2.5v2.3h-2.5zM829.0 162.0h2.5v2.3h-2.5zM900.6 162.0h2.5v2.3h-2.5zM829.0 165.7h2.5v2.3h-2.5zM900.6 165.7h2.5v2.3h-2.5zM829.0 169.1h2.5v2.3h-2.5zM900.6 169.1h2.5v2.3h-2.5zM824.7 175.0h2.5v2.3h-2.5zM900.6 175.0h2.5v2.3h-2.5zM824.7 178.9h2.5v2.3h-2.5zM900.6 178.9h2.5v2.3h-2.5zM824.7 182.6h2.5v2.3h-2.5zM905.0 182.6h2.5v2.3h-2.5zM824.4 186.4h3.0v1.4h-3.0zM904.7 186.4h3.0v1.4h-3.0zM816.3 191.9h2.5v2.3h-2.5zM820.6 191.9h2.5v2.3h-2.5zM905.0 191.9h2.5v2.3h-2.5zM491.6 195.8h2.5v2.3h-2.5zM495.7 195.8h2.5v2.3h-2.5zM812.2 195.8h2.5v2.3h-2.5zM905.0 195.8h2.5v2.3h-2.5zM487.3 199.5h2.5v2.3h-2.5zM500.1 199.5h2.5v2.3h-2.5zM807.8 199.5h2.5v2.3h-2.5zM905.0 199.5h2.5v2.3h-2.5zM1200.2 199.5h2.5v2.3h-2.5zM1204.3 199.5h2.5v2.3h-2.5zM483.2 202.9h2.5v2.3h-2.5zM504.2 202.9h2.5v2.3h-2.5zM508.5 202.9h2.5v2.3h-2.5zM803.7 202.9h2.5v2.3h-2.5zM909.0 202.9h2.5v2.3h-2.5zM1191.8 202.9h2.5v2.3h-2.5zM1195.8 202.9h2.5v2.3h-2.5zM1200.2 202.9h2.5v2.3h-2.5zM1204.3 202.9h2.5v2.3h-2.5zM1212.7 202.9h2.5v2.3h-2.5zM1242.4 202.9h2.5v2.3h-2.5zM10.8 208.8h2.5v2.3h-2.5zM99.3 208.8h2.5v2.3h-2.5zM103.6 208.8h2.5v2.3h-2.5zM107.7 208.8h2.5v2.3h-2.5zM112.1 208.8h2.5v2.3h-2.5zM453.6 208.8h2.5v2.3h-2.5zM457.9 208.8h2.5v2.3h-2.5zM462.0 208.8h2.5v2.3h-2.5zM466.3 208.8h2.5v2.3h-2.5zM478.9 208.8h2.5v2.3h-2.5zM508.5 208.8h2.5v2.3h-2.5zM512.6 208.8h2.5v2.3h-2.5zM517.0 208.8h2.5v2.3h-2.5zM529.5 208.8h2.5v2.3h-2.5zM533.8 208.8h2.5v2.3h-2.5zM537.9 208.8h2.5v2.3h-2.5zM542.3 208.8h2.5v2.3h-2.5zM546.3 208.8h2.5v2.3h-2.5zM550.7 208.8h2.5v2.3h-2.5zM554.8 208.8h2.5v2.3h-2.5zM799.4 208.8h2.5v2.3h-2.5zM905.0 208.8h2.5v2.3h-2.5zM909.0 208.8h2.5v2.3h-2.5zM913.4 208.8h2.5v2.3h-2.5zM917.5 208.8h2.5v2.3h-2.5zM921.8 208.8h2.5v2.3h-2.5zM925.9 208.8h2.5v2.3h-2.5zM930.3 208.8h2.5v2.3h-2.5zM934.3 208.8h2.5v2.3h-2.5zM938.7 208.8h2.5v2.3h-2.5zM1149.6 208.8h2.5v2.3h-2.5zM1153.7 208.8h2.5v2.3h-2.5zM1158.0 208.8h2.5v2.3h-2.5zM1162.1 208.8h2.5v2.3h-2.5zM1166.4 208.8h2.5v2.3h-2.5zM1170.5 208.8h2.5v2.3h-2.5zM1174.9 208.8h2.5v2.3h-2.5zM1179.0 208.8h2.5v2.3h-2.5zM1183.3 208.8h2.5v2.3h-2.5zM1187.4 208.8h2.5v2.3h-2.5zM1208.6 208.8h2.5v2.3h-2.5zM1212.7 208.8h2.5v2.3h-2.5zM1217.1 208.8h2.5v2.3h-2.5zM1221.1 208.8h2.5v2.3h-2.5zM1225.5 208.8h2.5v2.3h-2.5zM1229.6 208.8h2.5v2.3h-2.5zM1233.9 208.8h2.5v2.3h-2.5zM1238.0 208.8h2.5v2.3h-2.5zM1242.4 208.8h2.5v2.3h-2.5zM1246.4 208.8h2.5v2.3h-2.5zM10.8 212.6h2.5v2.3h-2.5zM14.9 212.6h2.5v2.3h-2.5zM19.3 212.6h2.5v2.3h-2.5zM23.4 212.6h2.5v2.3h-2.5zM86.8 212.6h2.5v2.3h-2.5zM90.8 212.6h2.5v2.3h-2.5zM95.2 212.6h2.5v2.3h-2.5zM99.3 212.6h2.5v2.3h-2.5zM103.6 212.6h2.5v2.3h-2.5zM107.7 212.6h2.5v2.3h-2.5zM112.1 212.6h2.5v2.3h-2.5zM116.1 212.6h2.5v2.3h-2.5zM120.5 212.6h2.5v2.3h-2.5zM124.6 212.6h2.5v2.3h-2.5zM128.9 212.6h2.5v2.3h-2.5zM133.0 212.6h2.5v2.3h-2.5zM137.4 212.6h2.5v2.3h-2.5zM141.5 212.6h2.5v2.3h-2.5zM263.9 212.6h2.5v2.3h-2.5zM268.0 212.6h2.5v2.3h-2.5zM272.3 212.6h2.5v2.3h-2.5zM276.4 212.6h2.5v2.3h-2.5zM280.8 212.6h2.5v2.3h-2.5zM284.9 212.6h2.5v2.3h-2.5zM289.2 212.6h2.5v2.3h-2.5zM293.3 212.6h2.5v2.3h-2.5zM297.6 212.6h2.5v2.3h-2.5zM301.7 212.6h2.5v2.3h-2.5zM306.1 212.6h2.5v2.3h-2.5zM310.2 212.6h2.5v2.3h-2.5zM314.5 212.6h2.5v2.3h-2.5zM318.6 212.6h2.5v2.3h-2.5zM322.9 212.6h2.5v2.3h-2.5zM327.0 212.6h2.5v2.3h-2.5zM331.4 212.6h2.5v2.3h-2.5zM335.5 212.6h2.5v2.3h-2.5zM339.8 212.6h2.5v2.3h-2.5zM343.9 212.6h2.5v2.3h-2.5zM348.3 212.6h2.5v2.3h-2.5zM352.3 212.6h2.5v2.3h-2.5zM356.7 212.6h2.5v2.3h-2.5zM360.8 212.6h2.5v2.3h-2.5zM365.1 212.6h2.5v2.3h-2.5zM369.2 212.6h2.5v2.3h-2.5zM373.6 212.6h2.5v2.3h-2.5zM377.6 212.6h2.5v2.3h-2.5zM382.0 212.6h2.5v2.3h-2.5zM386.1 212.6h2.5v2.3h-2.5zM390.4 212.6h2.5v2.3h-2.5zM394.5 212.6h2.5v2.3h-2.5zM398.9 212.6h2.5v2.3h-2.5zM402.9 212.6h2.5v2.3h-2.5zM407.3 212.6h2.5v2.3h-2.5zM441.0 212.6h2.5v2.3h-2.5zM445.1 212.6h2.5v2.3h-2.5zM449.5 212.6h2.5v2.3h-2.5zM470.4 212.6h2.5v2.3h-2.5zM474.8 212.6h2.5v2.3h-2.5zM478.9 212.6h2.5v2.3h-2.5zM508.5 212.6h2.5v2.3h-2.5zM512.6 212.6h2.5v2.3h-2.5zM517.0 212.6h2.5v2.3h-2.5zM521.0 212.6h2.5v2.3h-2.5zM525.4 212.6h2.5v2.3h-2.5zM542.3 212.6h2.5v2.3h-2.5zM546.3 212.6h2.5v2.3h-2.5zM550.7 212.6h2.5v2.3h-2.5zM554.8 212.6h2.5v2.3h-2.5zM559.1 212.6h2.5v2.3h-2.5zM563.2 212.6h2.5v2.3h-2.5zM571.6 212.6h2.5v2.3h-2.5zM576.0 212.6h2.5v2.3h-2.5zM580.1 212.6h2.5v2.3h-2.5zM584.4 212.6h2.5v2.3h-2.5zM647.6 212.6h2.5v2.3h-2.5zM651.9 212.6h2.5v2.3h-2.5zM656.0 212.6h2.5v2.3h-2.5zM660.3 212.6h2.5v2.3h-2.5zM664.4 212.6h2.5v2.3h-2.5zM668.8 212.6h2.5v2.3h-2.5zM672.9 212.6h2.5v2.3h-2.5zM677.2 212.6h2.5v2.3h-2.5zM681.3 212.6h2.5v2.3h-2.5zM685.7 212.6h2.5v2.3h-2.5zM689.7 212.6h2.5v2.3h-2.5zM694.1 212.6h2.5v2.3h-2.5zM698.2 212.6h2.5v2.3h-2.5zM702.5 212.6h2.5v2.3h-2.5zM736.3 212.6h2.5v2.3h-2.5zM740.3 212.6h2.5v2.3h-2.5zM744.7 212.6h2.5v2.3h-2.5zM748.8 212.6h2.5v2.3h-2.5zM753.1 212.6h2.5v2.3h-2.5zM757.2 212.6h2.5v2.3h-2.5zM761.6 212.6h2.5v2.3h-2.5zM795.3 212.6h2.5v2.3h-2.5zM799.4 212.6h2.5v2.3h-2.5zM905.0 212.6h2.5v2.3h-2.5zM909.0 212.6h2.5v2.3h-2.5zM942.8 212.6h2.5v2.3h-2.5zM947.1 212.6h2.5v2.3h-2.5zM951.2 212.6h2.5v2.3h-2.5zM955.6 212.6h2.5v2.3h-2.5zM959.7 212.6h2.5v2.3h-2.5zM964.0 212.6h2.5v2.3h-2.5zM968.1 212.6h2.5v2.3h-2.5zM1060.9 212.6h2.5v2.3h-2.5zM1065.2 212.6h2.5v2.3h-2.5zM1069.3 212.6h2.5v2.3h-2.5zM1073.7 212.6h2.5v2.3h-2.5zM1077.7 212.6h2.5v2.3h-2.5zM1082.1 212.6h2.5v2.3h-2.5zM1086.2 212.6h2.5v2.3h-2.5zM1119.9 212.6h2.5v2.3h-2.5zM1124.3 212.6h2.5v2.3h-2.5zM1128.3 212.6h2.5v2.3h-2.5zM1132.7 212.6h2.5v2.3h-2.5zM1136.8 212.6h2.5v2.3h-2.5zM1141.1 212.6h2.5v2.3h-2.5zM1145.2 212.6h2.5v2.3h-2.5zM1149.6 212.6h2.5v2.3h-2.5zM1153.7 212.6h2.5v2.3h-2.5zM1158.0 212.6h2.5v2.3h-2.5zM1162.1 212.6h2.5v2.3h-2.5zM1166.4 212.6h2.5v2.3h-2.5zM1170.5 212.6h2.5v2.3h-2.5zM1174.9 212.6h2.5v2.3h-2.5zM1179.0 212.6h2.5v2.3h-2.5zM1183.3 212.6h2.5v2.3h-2.5zM1187.4 212.6h2.5v2.3h-2.5zM1208.6 212.6h2.5v2.3h-2.5zM1212.7 212.6h2.5v2.3h-2.5zM1217.1 212.6h2.5v2.3h-2.5zM1221.1 212.6h2.5v2.3h-2.5zM1225.5 212.6h2.5v2.3h-2.5zM1229.6 212.6h2.5v2.3h-2.5zM1233.9 212.6h2.5v2.3h-2.5zM1250.8 212.6h2.5v2.3h-2.5zM1254.9 212.6h2.5v2.3h-2.5zM1259.2 212.6h2.5v2.3h-2.5zM1263.3 212.6h2.5v2.3h-2.5zM10.6 216.8h3.0v1.4h-3.0zM14.7 216.8h3.0v1.4h-3.0zM19.0 216.8h3.0v1.4h-3.0zM23.1 216.8h3.0v1.4h-3.0zM27.5 216.8h3.0v1.4h-3.0zM31.5 216.8h3.0v1.4h-3.0zM35.9 216.8h3.0v1.4h-3.0zM40.0 216.8h3.0v1.4h-3.0zM44.3 216.8h3.0v1.4h-3.0zM48.4 216.8h3.0v1.4h-3.0zM52.8 216.8h3.0v1.4h-3.0zM56.9 216.8h3.0v1.4h-3.0zM61.2 216.8h3.0v1.4h-3.0zM65.3 216.8h3.0v1.4h-3.0zM69.6 216.8h3.0v1.4h-3.0zM73.7 216.8h3.0v1.4h-3.0zM78.1 216.8h3.0v1.4h-3.0zM82.2 216.8h3.0v1.4h-3.0zM86.5 216.8h3.0v1.4h-3.0zM90.6 216.8h3.0v1.4h-3.0zM95.0 216.8h3.0v1.4h-3.0zM99.0 216.8h3.0v1.4h-3.0zM103.4 216.8h3.0v1.4h-3.0zM107.5 216.8h3.0v1.4h-3.0zM111.8 216.8h3.0v1.4h-3.0zM115.9 216.8h3.0v1.4h-3.0zM120.3 216.8h3.0v1.4h-3.0zM124.3 216.8h3.0v1.4h-3.0zM128.7 216.8h3.0v1.4h-3.0zM132.8 216.8h3.0v1.4h-3.0zM137.1 216.8h3.0v1.4h-3.0zM141.2 216.8h3.0v1.4h-3.0zM145.6 216.8h3.0v1.4h-3.0zM149.6 216.8h3.0v1.4h-3.0zM154.0 216.8h3.0v1.4h-3.0zM158.1 216.8h3.0v1.4h-3.0zM162.4 216.8h3.0v1.4h-3.0zM166.5 216.8h3.0v1.4h-3.0zM170.9 216.8h3.0v1.4h-3.0zM174.9 216.8h3.0v1.4h-3.0zM179.3 216.8h3.0v1.4h-3.0zM183.4 216.8h3.0v1.4h-3.0zM187.7 216.8h3.0v1.4h-3.0zM191.8 216.8h3.0v1.4h-3.0zM196.2 216.8h3.0v1.4h-3.0zM200.3 216.8h3.0v1.4h-3.0zM204.6 216.8h3.0v1.4h-3.0zM208.7 216.8h3.0v1.4h-3.0zM213.0 216.8h3.0v1.4h-3.0zM217.1 216.8h3.0v1.4h-3.0zM221.5 216.8h3.0v1.4h-3.0zM225.6 216.8h3.0v1.4h-3.0zM229.9 216.8h3.0v1.4h-3.0zM234.0 216.8h3.0v1.4h-3.0zM238.3 216.8h3.0v1.4h-3.0zM242.4 216.8h3.0v1.4h-3.0zM246.8 216.8h3.0v1.4h-3.0zM250.9 216.8h3.0v1.4h-3.0zM255.2 216.8h3.0v1.4h-3.0zM259.3 216.8h3.0v1.4h-3.0zM263.7 216.8h3.0v1.4h-3.0zM267.7 216.8h3.0v1.4h-3.0zM272.1 216.8h3.0v1.4h-3.0zM276.2 216.8h3.0v1.4h-3.0zM280.5 216.8h3.0v1.4h-3.0zM284.6 216.8h3.0v1.4h-3.0zM289.0 216.8h3.0v1.4h-3.0zM293.0 216.8h3.0v1.4h-3.0zM297.4 216.8h3.0v1.4h-3.0zM301.5 216.8h3.0v1.4h-3.0zM305.8 216.8h3.0v1.4h-3.0zM309.9 216.8h3.0v1.4h-3.0zM314.3 216.8h3.0v1.4h-3.0zM318.3 216.8h3.0v1.4h-3.0zM322.7 216.8h3.0v1.4h-3.0zM326.8 216.8h3.0v1.4h-3.0zM331.1 216.8h3.0v1.4h-3.0zM335.2 216.8h3.0v1.4h-3.0zM339.6 216.8h3.0v1.4h-3.0zM343.6 216.8h3.0v1.4h-3.0zM348.0 216.8h3.0v1.4h-3.0zM352.1 216.8h3.0v1.4h-3.0zM356.4 216.8h3.0v1.4h-3.0zM360.5 216.8h3.0v1.4h-3.0zM364.9 216.8h3.0v1.4h-3.0zM369.0 216.8h3.0v1.4h-3.0zM373.3 216.8h3.0v1.4h-3.0zM377.4 216.8h3.0v1.4h-3.0zM381.7 216.8h3.0v1.4h-3.0zM385.8 216.8h3.0v1.4h-3.0zM390.2 216.8h3.0v1.4h-3.0zM394.3 216.8h3.0v1.4h-3.0zM398.6 216.8h3.0v1.4h-3.0zM402.7 216.8h3.0v1.4h-3.0zM407.0 216.8h3.0v1.4h-3.0zM411.1 216.8h3.0v1.4h-3.0zM415.5 216.8h3.0v1.4h-3.0zM419.6 216.8h3.0v1.4h-3.0zM423.9 216.8h3.0v1.4h-3.0zM428.0 216.8h3.0v1.4h-3.0zM432.4 216.8h3.0v1.4h-3.0zM436.4 216.8h3.0v1.4h-3.0zM440.8 216.8h3.0v1.4h-3.0zM444.9 216.8h3.0v1.4h-3.0zM449.2 216.8h3.0v1.4h-3.0zM453.3 216.8h3.0v1.4h-3.0zM457.7 216.8h3.0v1.4h-3.0zM461.7 216.8h3.0v1.4h-3.0zM466.1 216.8h3.0v1.4h-3.0zM470.2 216.8h3.0v1.4h-3.0zM474.5 216.8h3.0v1.4h-3.0zM478.6 216.8h3.0v1.4h-3.0zM508.3 216.8h3.0v1.4h-3.0zM512.3 216.8h3.0v1.4h-3.0zM516.7 216.8h3.0v1.4h-3.0zM520.8 216.8h3.0v1.4h-3.0zM525.1 216.8h3.0v1.4h-3.0zM529.2 216.8h3.0v1.4h-3.0zM533.6 216.8h3.0v1.4h-3.0zM537.7 216.8h3.0v1.4h-3.0zM542.0 216.8h3.0v1.4h-3.0zM546.1 216.8h3.0v1.4h-3.0zM550.4 216.8h3.0v1.4h-3.0zM554.5 216.8h3.0v1.4h-3.0zM558.9 216.8h3.0v1.4h-3.0zM563.0 216.8h3.0v1.4h-3.0zM567.3 216.8h3.0v1.4h-3.0zM571.4 216.8h3.0v1.4h-3.0zM575.7 216.8h3.0v1.4h-3.0zM579.8 216.8h3.0v1.4h-3.0zM584.2 216.8h3.0v1.4h-3.0zM588.3 216.8h3.0v1.4h-3.0zM592.6 216.8h3.0v1.4h-3.0zM596.7 216.8h3.0v1.4h-3.0zM601.1 216.8h3.0v1.4h-3.0zM605.1 216.8h3.0v1.4h-3.0zM609.5 216.8h3.0v1.4h-3.0zM613.6 216.8h3.0v1.4h-3.0zM617.9 216.8h3.0v1.4h-3.0zM622.0 216.8h3.0v1.4h-3.0zM626.4 216.8h3.0v1.4h-3.0zM630.4 216.8h3.0v1.4h-3.0zM634.8 216.8h3.0v1.4h-3.0zM638.9 216.8h3.0v1.4h-3.0zM643.2 216.8h3.0v1.4h-3.0zM647.3 216.8h3.0v1.4h-3.0zM651.7 216.8h3.0v1.4h-3.0zM655.7 216.8h3.0v1.4h-3.0zM660.1 216.8h3.0v1.4h-3.0zM664.2 216.8h3.0v1.4h-3.0zM668.5 216.8h3.0v1.4h-3.0zM672.6 216.8h3.0v1.4h-3.0zM677.0 216.8h3.0v1.4h-3.0zM681.0 216.8h3.0v1.4h-3.0zM685.4 216.8h3.0v1.4h-3.0zM689.5 216.8h3.0v1.4h-3.0zM693.8 216.8h3.0v1.4h-3.0zM697.9 216.8h3.0v1.4h-3.0zM702.3 216.8h3.0v1.4h-3.0zM706.4 216.8h3.0v1.4h-3.0zM710.7 216.8h3.0v1.4h-3.0zM714.8 216.8h3.0v1.4h-3.0zM719.1 216.8h3.0v1.4h-3.0zM723.2 216.8h3.0v1.4h-3.0zM727.6 216.8h3.0v1.4h-3.0zM731.7 216.8h3.0v1.4h-3.0zM736.0 216.8h3.0v1.4h-3.0zM740.1 216.8h3.0v1.4h-3.0zM744.4 216.8h3.0v1.4h-3.0zM748.5 216.8h3.0v1.4h-3.0zM752.9 216.8h3.0v1.4h-3.0zM757.0 216.8h3.0v1.4h-3.0zM761.3 216.8h3.0v1.4h-3.0zM765.4 216.8h3.0v1.4h-3.0zM769.8 216.8h3.0v1.4h-3.0zM773.8 216.8h3.0v1.4h-3.0zM778.2 216.8h3.0v1.4h-3.0zM782.3 216.8h3.0v1.4h-3.0zM786.6 216.8h3.0v1.4h-3.0zM790.7 216.8h3.0v1.4h-3.0zM795.1 216.8h3.0v1.4h-3.0zM799.1 216.8h3.0v1.4h-3.0zM908.8 216.8h3.0v1.4h-3.0zM913.1 216.8h3.0v1.4h-3.0zM917.2 216.8h3.0v1.4h-3.0zM921.6 216.8h3.0v1.4h-3.0zM925.7 216.8h3.0v1.4h-3.0zM930.0 216.8h3.0v1.4h-3.0zM934.1 216.8h3.0v1.4h-3.0zM938.5 216.8h3.0v1.4h-3.0zM942.5 216.8h3.0v1.4h-3.0zM946.9 216.8h3.0v1.4h-3.0zM951.0 216.8h3.0v1.4h-3.0zM955.3 216.8h3.0v1.4h-3.0zM959.4 216.8h3.0v1.4h-3.0zM963.8 216.8h3.0v1.4h-3.0zM967.8 216.8h3.0v1.4h-3.0zM972.2 216.8h3.0v1.4h-3.0zM976.3 216.8h3.0v1.4h-3.0zM980.6 216.8h3.0v1.4h-3.0zM984.7 216.8h3.0v1.4h-3.0zM989.1 216.8h3.0v1.4h-3.0zM993.1 216.8h3.0v1.4h-3.0zM997.5 216.8h3.0v1.4h-3.0zM1001.6 216.8h3.0v1.4h-3.0zM1005.9 216.8h3.0v1.4h-3.0zM1010.0 216.8h3.0v1.4h-3.0zM1014.4 216.8h3.0v1.4h-3.0zM1018.4 216.8h3.0v1.4h-3.0zM1022.8 216.8h3.0v1.4h-3.0zM1026.9 216.8h3.0v1.4h-3.0zM1031.2 216.8h3.0v1.4h-3.0zM1035.3 216.8h3.0v1.4h-3.0zM1039.7 216.8h3.0v1.4h-3.0zM1043.8 216.8h3.0v1.4h-3.0zM1048.1 216.8h3.0v1.4h-3.0zM1052.2 216.8h3.0v1.4h-3.0zM1056.5 216.8h3.0v1.4h-3.0zM1060.6 216.8h3.0v1.4h-3.0zM1065.0 216.8h3.0v1.4h-3.0zM1069.1 216.8h3.0v1.4h-3.0zM1073.4 216.8h3.0v1.4h-3.0zM1077.5 216.8h3.0v1.4h-3.0zM1081.8 216.8h3.0v1.4h-3.0zM1085.9 216.8h3.0v1.4h-3.0zM1090.3 216.8h3.0v1.4h-3.0zM1094.4 216.8h3.0v1.4h-3.0zM1098.7 216.8h3.0v1.4h-3.0zM1102.8 216.8h3.0v1.4h-3.0zM1107.1 216.8h3.0v1.4h-3.0zM1111.2 216.8h3.0v1.4h-3.0zM1115.6 216.8h3.0v1.4h-3.0zM1119.7 216.8h3.0v1.4h-3.0zM1124.0 216.8h3.0v1.4h-3.0zM1128.1 216.8h3.0v1.4h-3.0zM1132.5 216.8h3.0v1.4h-3.0zM1136.5 216.8h3.0v1.4h-3.0zM1140.9 216.8h3.0v1.4h-3.0zM1145.0 216.8h3.0v1.4h-3.0zM1149.3 216.8h3.0v1.4h-3.0zM1153.4 216.8h3.0v1.4h-3.0zM1157.8 216.8h3.0v1.4h-3.0zM1161.8 216.8h3.0v1.4h-3.0zM1166.2 216.8h3.0v1.4h-3.0zM1170.3 216.8h3.0v1.4h-3.0zM1174.6 216.8h3.0v1.4h-3.0zM1178.7 216.8h3.0v1.4h-3.0zM1220.9 216.8h3.0v1.4h-3.0zM1225.2 216.8h3.0v1.4h-3.0zM1237.8 216.8h3.0v1.4h-3.0zM1242.1 216.8h3.0v1.4h-3.0zM1246.2 216.8h3.0v1.4h-3.0zM1250.5 216.8h3.0v1.4h-3.0zM1254.6 216.8h3.0v1.4h-3.0zM1259.0 216.8h3.0v1.4h-3.0zM1263.1 216.8h3.0v1.4h-3.0zM57.1 219.8h2.5v2.3h-2.5zM61.5 219.8h2.5v2.3h-2.5zM65.5 219.8h2.5v2.3h-2.5zM69.9 219.8h2.5v2.3h-2.5zM74.0 219.8h2.5v2.3h-2.5zM78.3 219.8h2.5v2.3h-2.5zM82.4 219.8h2.5v2.3h-2.5zM86.8 219.8h2.5v2.3h-2.5zM90.8 219.8h2.5v2.3h-2.5zM95.2 219.8h2.5v2.3h-2.5zM99.3 219.8h2.5v2.3h-2.5zM103.6 219.8h2.5v2.3h-2.5zM107.7 219.8h2.5v2.3h-2.5zM112.1 219.8h2.5v2.3h-2.5zM116.1 219.8h2.5v2.3h-2.5zM120.5 219.8h2.5v2.3h-2.5zM124.6 219.8h2.5v2.3h-2.5zM128.9 219.8h2.5v2.3h-2.5zM133.0 219.8h2.5v2.3h-2.5zM137.4 219.8h2.5v2.3h-2.5zM141.5 219.8h2.5v2.3h-2.5zM175.2 219.8h2.5v2.3h-2.5zM179.6 219.8h2.5v2.3h-2.5zM183.6 219.8h2.5v2.3h-2.5zM188.0 219.8h2.5v2.3h-2.5zM192.1 219.8h2.5v2.3h-2.5zM196.4 219.8h2.5v2.3h-2.5zM200.5 219.8h2.5v2.3h-2.5zM394.5 219.8h2.5v2.3h-2.5zM398.9 219.8h2.5v2.3h-2.5zM402.9 219.8h2.5v2.3h-2.5zM407.3 219.8h2.5v2.3h-2.5zM441.0 219.8h2.5v2.3h-2.5zM445.1 219.8h2.5v2.3h-2.5zM449.5 219.8h2.5v2.3h-2.5zM453.6 219.8h2.5v2.3h-2.5zM457.9 219.8h2.5v2.3h-2.5zM462.0 219.8h2.5v2.3h-2.5zM466.3 219.8h2.5v2.3h-2.5zM542.3 219.8h2.5v2.3h-2.5zM546.3 219.8h2.5v2.3h-2.5zM550.7 219.8h2.5v2.3h-2.5zM554.8 219.8h2.5v2.3h-2.5zM576.0 219.8h2.5v2.3h-2.5zM580.1 219.8h2.5v2.3h-2.5zM584.4 219.8h2.5v2.3h-2.5zM588.5 219.8h2.5v2.3h-2.5zM592.9 219.8h2.5v2.3h-2.5zM596.9 219.8h2.5v2.3h-2.5zM601.3 219.8h2.5v2.3h-2.5zM605.4 219.8h2.5v2.3h-2.5zM609.7 219.8h2.5v2.3h-2.5zM613.8 219.8h2.5v2.3h-2.5zM677.2 219.8h2.5v2.3h-2.5zM681.3 219.8h2.5v2.3h-2.5zM685.7 219.8h2.5v2.3h-2.5zM689.7 219.8h2.5v2.3h-2.5zM694.1 219.8h2.5v2.3h-2.5zM698.2 219.8h2.5v2.3h-2.5zM702.5 219.8h2.5v2.3h-2.5zM795.3 219.8h2.5v2.3h-2.5zM799.4 219.8h2.5v2.3h-2.5zM905.0 219.8h2.5v2.3h-2.5zM909.0 219.8h2.5v2.3h-2.5zM913.4 219.8h2.5v2.3h-2.5zM917.5 219.8h2.5v2.3h-2.5zM921.8 219.8h2.5v2.3h-2.5zM925.9 219.8h2.5v2.3h-2.5zM930.3 219.8h2.5v2.3h-2.5zM934.3 219.8h2.5v2.3h-2.5zM938.7 219.8h2.5v2.3h-2.5zM1060.9 219.8h2.5v2.3h-2.5zM1065.2 219.8h2.5v2.3h-2.5zM1069.3 219.8h2.5v2.3h-2.5zM1073.7 219.8h2.5v2.3h-2.5zM1077.7 219.8h2.5v2.3h-2.5zM1082.1 219.8h2.5v2.3h-2.5zM1086.2 219.8h2.5v2.3h-2.5zM1119.9 219.8h2.5v2.3h-2.5zM1124.3 219.8h2.5v2.3h-2.5zM1128.3 219.8h2.5v2.3h-2.5zM1132.7 219.8h2.5v2.3h-2.5zM1136.8 219.8h2.5v2.3h-2.5zM1141.1 219.8h2.5v2.3h-2.5zM1145.2 219.8h2.5v2.3h-2.5zM1149.6 219.8h2.5v2.3h-2.5zM1153.7 219.8h2.5v2.3h-2.5zM1158.0 219.8h2.5v2.3h-2.5zM1162.1 219.8h2.5v2.3h-2.5zM1166.4 219.8h2.5v2.3h-2.5zM1170.5 219.8h2.5v2.3h-2.5zM1174.9 219.8h2.5v2.3h-2.5zM1229.6 219.8h2.5v2.3h-2.5zM1233.9 219.8h2.5v2.3h-2.5z"/><path fill="#c8c8a8" d="M875.3 191.9h2.5v2.3h-2.5zM879.7 191.9h2.5v2.3h-2.5zM871.2 195.8h2.5v2.3h-2.5zM883.7 195.8h2.5v2.3h-2.5zM866.9 199.5h2.5v2.3h-2.5zM888.1 199.5h2.5v2.3h-2.5zM892.2 199.5h2.5v2.3h-2.5zM1246.4 199.5h2.5v2.3h-2.5zM862.8 202.9h2.5v2.3h-2.5zM896.5 202.9h2.5v2.3h-2.5zM900.6 202.9h2.5v2.3h-2.5zM1208.6 202.9h2.5v2.3h-2.5zM1217.1 202.9h2.5v2.3h-2.5zM1238.0 202.9h2.5v2.3h-2.5z"/><path fill="#d8a818" d="M1254.9 195.8h2.5v2.3h-2.5zM1259.2 195.8h2.5v2.3h-2.5zM1263.3 195.8h2.5v2.3h-2.5zM1250.8 199.5h2.5v2.3h-2.5zM1250.8 202.9h2.5v2.3h-2.5zM1254.9 202.9h2.5v2.3h-2.5zM1259.2 202.9h2.5v2.3h-2.5zM1263.3 202.9h2.5v2.3h-2.5z"/><path fill="#90a010" d="M517.0 202.9h2.5v2.3h-2.5zM521.0 202.9h2.5v2.3h-2.5zM525.4 202.9h2.5v2.3h-2.5z"/><path fill="#b09a18" d="M807.8 208.8h2.5v2.3h-2.5zM812.2 208.8h2.5v2.3h-2.5zM816.3 208.8h2.5v2.3h-2.5zM820.6 208.8h2.5v2.3h-2.5zM858.4 208.8h2.5v2.3h-2.5zM866.9 208.8h2.5v2.3h-2.5zM871.2 208.8h2.5v2.3h-2.5zM875.3 208.8h2.5v2.3h-2.5zM879.7 208.8h2.5v2.3h-2.5zM1191.8 208.8h2.5v2.3h-2.5zM1195.8 208.8h2.5v2.3h-2.5zM1200.2 208.8h2.5v2.3h-2.5zM1204.3 208.8h2.5v2.3h-2.5zM500.1 212.6h2.5v2.3h-2.5zM504.2 212.6h2.5v2.3h-2.5zM803.7 212.6h2.5v2.3h-2.5zM824.7 212.6h2.5v2.3h-2.5zM829.0 212.6h2.5v2.3h-2.5zM833.1 212.6h2.5v2.3h-2.5zM854.4 212.6h2.5v2.3h-2.5zM858.4 212.6h2.5v2.3h-2.5zM862.8 212.6h2.5v2.3h-2.5zM883.7 212.6h2.5v2.3h-2.5zM888.1 212.6h2.5v2.3h-2.5zM892.2 212.6h2.5v2.3h-2.5zM896.5 212.6h2.5v2.3h-2.5zM900.6 212.6h2.5v2.3h-2.5zM483.0 216.8h3.0v1.4h-3.0zM487.0 216.8h3.0v1.4h-3.0zM491.4 216.8h3.0v1.4h-3.0zM495.5 216.8h3.0v1.4h-3.0zM499.8 216.8h3.0v1.4h-3.0zM503.9 216.8h3.0v1.4h-3.0zM803.5 216.8h3.0v1.4h-3.0zM807.6 216.8h3.0v1.4h-3.0zM811.9 216.8h3.0v1.4h-3.0zM816.0 216.8h3.0v1.4h-3.0zM820.4 216.8h3.0v1.4h-3.0zM824.4 216.8h3.0v1.4h-3.0zM828.8 216.8h3.0v1.4h-3.0zM832.9 216.8h3.0v1.4h-3.0zM837.2 216.8h3.0v1.4h-3.0zM841.3 216.8h3.0v1.4h-3.0zM845.7 216.8h3.0v1.4h-3.0zM849.7 216.8h3.0v1.4h-3.0zM854.1 216.8h3.0v1.4h-3.0zM858.2 216.8h3.0v1.4h-3.0zM862.5 216.8h3.0v1.4h-3.0zM866.6 216.8h3.0v1.4h-3.0zM871.0 216.8h3.0v1.4h-3.0zM875.1 216.8h3.0v1.4h-3.0zM879.4 216.8h3.0v1.4h-3.0zM803.7 219.8h2.5v2.3h-2.5zM807.8 219.8h2.5v2.3h-2.5zM812.2 219.8h2.5v2.3h-2.5zM816.3 219.8h2.5v2.3h-2.5zM820.6 219.8h2.5v2.3h-2.5zM883.7 219.8h2.5v2.3h-2.5zM888.1 219.8h2.5v2.3h-2.5zM892.2 219.8h2.5v2.3h-2.5zM896.5 219.8h2.5v2.3h-2.5zM900.6 219.8h2.5v2.3h-2.5z"/></svg>
</body></html>
